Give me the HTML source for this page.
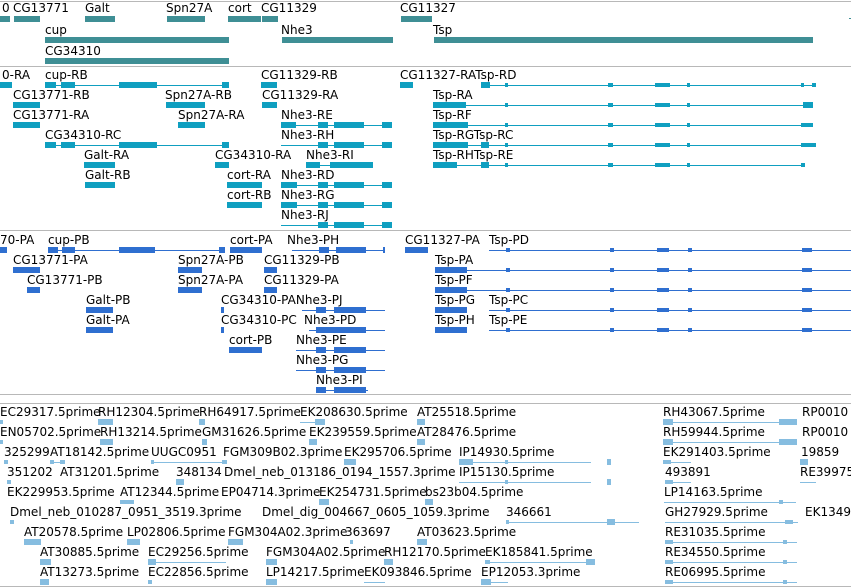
<!DOCTYPE html>
<html><head><meta charset="utf-8"><style>
body{margin:0;width:851px;height:587px;background:#fff;position:relative;overflow:hidden}
.t{position:absolute;font:12px "DejaVu Sans",sans-serif;line-height:14px;white-space:nowrap;color:#000}
.h{position:absolute;left:0;width:851px;height:1px;background:#b8b8b8}
.a div{position:absolute}
.k div{background:#3f8f95}
.c div{background:#0f9fc0}
.b div{background:#2f6fd0}
.l div{background:#86bde0}
</style></head><body>
<div class="h" style="top:1px"></div>
<div class="h" style="top:66px"></div>
<div class="h" style="top:230px"></div>
<div class="h" style="top:394px"></div>
<div class="h" style="top:403px"></div>
<div class="h" style="top:586px"></div>

<!-- Track 1 -->
<div class="t" style="left:2px;top:1px">0</div>
<div class="t" style="left:13px;top:1px">CG13771</div>
<div class="t" style="left:85px;top:1px">Galt</div>
<div class="t" style="left:166px;top:1px">Spn27A</div>
<div class="t" style="left:228px;top:1px">cort</div>
<div class="t" style="left:261px;top:1px">CG11329</div>
<div class="t" style="left:400px;top:1px">CG11327</div>
<div class="t" style="left:45px;top:23px">cup</div>
<div class="t" style="left:281px;top:23px">Nhe3</div>
<div class="t" style="left:433px;top:23px">Tsp</div>
<div class="t" style="left:45px;top:44px">CG34310</div>
<div class="a k">
<div style="left:0;top:16px;width:10px;height:6px"></div>
<div style="left:14px;top:16px;width:26px;height:6px"></div>
<div style="left:85px;top:16px;width:30px;height:6px"></div>
<div style="left:167px;top:16px;width:38px;height:6px"></div>
<div style="left:228px;top:16px;width:33px;height:6px"></div>
<div style="left:262px;top:16px;width:16px;height:6px"></div>
<div style="left:401px;top:16px;width:31px;height:6px"></div>
<div style="left:849px;top:18px;width:2px;height:1px"></div>
<div style="left:45px;top:37px;width:184px;height:6px"></div>
<div style="left:282px;top:37px;width:111px;height:6px"></div>
<div style="left:434px;top:37px;width:379px;height:6px"></div>
<div style="left:45px;top:58px;width:184px;height:6px"></div>
</div>

<!-- Track 2 -->
<div class="t" style="left:2px;top:68px">0-RA</div>
<div class="t" style="left:45px;top:68px">cup-RB</div>
<div class="t" style="left:261px;top:68px">CG11329-RB</div>
<div class="t" style="left:400px;top:68px">CG11327-RATsp-RD</div>
<div class="t" style="left:13px;top:88px">CG13771-RB</div>
<div class="t" style="left:165px;top:88px">Spn27A-RB</div>
<div class="t" style="left:262px;top:88px">CG11329-RA</div>
<div class="t" style="left:433px;top:88px">Tsp-RA</div>
<div class="t" style="left:13px;top:108px">CG13771-RA</div>
<div class="t" style="left:178px;top:108px">Spn27A-RA</div>
<div class="t" style="left:281px;top:108px">Nhe3-RE</div>
<div class="t" style="left:433px;top:108px">Tsp-RF</div>
<div class="t" style="left:45px;top:128px">CG34310-RC</div>
<div class="t" style="left:281px;top:128px">Nhe3-RH</div>
<div class="t" style="left:433px;top:128px">Tsp-RGTsp-RC</div>
<div class="t" style="left:84px;top:148px">Galt-RA</div>
<div class="t" style="left:215px;top:148px">CG34310-RA</div>
<div class="t" style="left:306px;top:148px">Nhe3-RI</div>
<div class="t" style="left:433px;top:148px">Tsp-RHTsp-RE</div>
<div class="t" style="left:85px;top:168px">Galt-RB</div>
<div class="t" style="left:227px;top:168px">cort-RA</div>
<div class="t" style="left:281px;top:168px">Nhe3-RD</div>
<div class="t" style="left:227px;top:188px">cort-RB</div>
<div class="t" style="left:281px;top:188px">Nhe3-RG</div>
<div class="t" style="left:281px;top:208px">Nhe3-RJ</div>
<div class="a c">
<!-- row0 -->
<div style="left:0;top:82px;width:12px;height:6px"></div>
<div style="left:45px;top:85px;width:184px;height:1px"></div>
<div style="left:45px;top:82px;width:11px;height:6px"></div>
<div style="left:61px;top:82px;width:14px;height:6px"></div>
<div style="left:119px;top:82px;width:38px;height:6px"></div>
<div style="left:222px;top:82px;width:7px;height:6px"></div>
<div style="left:261px;top:82px;width:16px;height:6px"></div>
<div style="left:400px;top:82px;width:13px;height:6px"></div>
<div style="left:481px;top:85px;width:335px;height:1px"></div>
<div style="left:481px;top:82px;width:9px;height:6px"></div>
<!-- row1 -->
<div style="left:13px;top:102px;width:27px;height:6px"></div>
<div style="left:166px;top:102px;width:39px;height:6px"></div>
<div style="left:262px;top:102px;width:15px;height:6px"></div>
<div style="left:433px;top:105px;width:380px;height:1px"></div>
<div style="left:433px;top:102px;width:33px;height:6px"></div>
<div style="left:803px;top:102px;width:10px;height:6px"></div>
<!-- row2 -->
<div style="left:13px;top:122px;width:27px;height:6px"></div>
<div style="left:178px;top:122px;width:27px;height:6px"></div>
<div style="left:281px;top:125px;width:111px;height:1px"></div>
<div style="left:281px;top:122px;width:15px;height:6px"></div>
<div style="left:318px;top:122px;width:10px;height:6px"></div>
<div style="left:334px;top:122px;width:30px;height:6px"></div>
<div style="left:382px;top:122px;width:10px;height:6px"></div>
<div style="left:433px;top:125px;width:380px;height:1px"></div>
<div style="left:433px;top:122px;width:35px;height:6px"></div>
<!-- row3 -->
<div style="left:45px;top:145px;width:184px;height:1px"></div>
<div style="left:45px;top:142px;width:11px;height:6px"></div>
<div style="left:61px;top:142px;width:14px;height:6px"></div>
<div style="left:119px;top:142px;width:38px;height:6px"></div>
<div style="left:222px;top:142px;width:7px;height:6px"></div>
<div style="left:281px;top:145px;width:111px;height:1px"></div>
<div style="left:318px;top:142px;width:10px;height:6px"></div>
<div style="left:334px;top:142px;width:30px;height:6px"></div>
<div style="left:382px;top:142px;width:10px;height:6px"></div>
<div style="left:433px;top:145px;width:380px;height:1px"></div>
<div style="left:433px;top:142px;width:35px;height:6px"></div>
<div style="left:481px;top:142px;width:8px;height:6px"></div>
<!-- row4 -->
<div style="left:84px;top:162px;width:31px;height:6px"></div>
<div style="left:215px;top:162px;width:14px;height:6px"></div>
<div style="left:306px;top:165px;width:67px;height:1px"></div>
<div style="left:306px;top:162px;width:14px;height:6px"></div>
<div style="left:330px;top:162px;width:43px;height:6px"></div>
<div style="left:433px;top:165px;width:372px;height:1px"></div>
<div style="left:433px;top:162px;width:24px;height:6px"></div>
<div style="left:481px;top:162px;width:8px;height:6px"></div>
<!-- row5 -->
<div style="left:85px;top:182px;width:30px;height:6px"></div>
<div style="left:227px;top:182px;width:35px;height:6px"></div>
<div style="left:281px;top:185px;width:111px;height:1px"></div>
<div style="left:281px;top:182px;width:16px;height:6px"></div>
<div style="left:318px;top:182px;width:10px;height:6px"></div>
<div style="left:334px;top:182px;width:30px;height:6px"></div>
<div style="left:382px;top:182px;width:10px;height:6px"></div>
<!-- row6 -->
<div style="left:227px;top:202px;width:35px;height:6px"></div>
<div style="left:281px;top:205px;width:111px;height:1px"></div>
<div style="left:281px;top:202px;width:16px;height:6px"></div>
<div style="left:318px;top:202px;width:10px;height:6px"></div>
<div style="left:334px;top:202px;width:30px;height:6px"></div>
<div style="left:382px;top:202px;width:10px;height:6px"></div>
<!-- row7 -->
<div style="left:281px;top:225px;width:111px;height:1px"></div>
<div style="left:318px;top:222px;width:10px;height:6px"></div>
<div style="left:334px;top:222px;width:30px;height:6px"></div>
<div style="left:382px;top:222px;width:10px;height:6px"></div>
<!-- Tsp ticks -->
<div style="left:505px;top:83px;width:3px;height:4px"></div>
<div style="left:608px;top:83px;width:5px;height:4px"></div>
<div style="left:655px;top:83px;width:15px;height:4px"></div>
<div style="left:687px;top:83px;width:3px;height:4px"></div>
<div style="left:801px;top:83px;width:3px;height:4px"></div>
<div style="left:812px;top:83px;width:4px;height:4px"></div>
<div style="left:505px;top:103px;width:3px;height:4px"></div>
<div style="left:608px;top:103px;width:5px;height:4px"></div>
<div style="left:655px;top:103px;width:15px;height:4px"></div>
<div style="left:687px;top:103px;width:3px;height:4px"></div>
<div style="left:505px;top:123px;width:3px;height:4px"></div>
<div style="left:608px;top:123px;width:5px;height:4px"></div>
<div style="left:655px;top:123px;width:15px;height:4px"></div>
<div style="left:687px;top:123px;width:3px;height:4px"></div>
<div style="left:801px;top:123px;width:12px;height:4px"></div>
<div style="left:505px;top:143px;width:3px;height:4px"></div>
<div style="left:608px;top:143px;width:5px;height:4px"></div>
<div style="left:655px;top:143px;width:15px;height:4px"></div>
<div style="left:687px;top:143px;width:3px;height:4px"></div>
<div style="left:801px;top:143px;width:15px;height:4px"></div>
<div style="left:505px;top:163px;width:3px;height:4px"></div>
<div style="left:608px;top:163px;width:5px;height:4px"></div>
<div style="left:655px;top:163px;width:15px;height:4px"></div>
<div style="left:687px;top:163px;width:3px;height:4px"></div>
<div style="left:801px;top:163px;width:4px;height:4px"></div>
</div>

<!-- Track 3 -->
<div class="t" style="left:0;top:233px">70-PA</div>
<div class="t" style="left:48px;top:233px">cup-PB</div>
<div class="t" style="left:230px;top:233px">cort-PA</div>
<div class="t" style="left:287px;top:233px">Nhe3-PH</div>
<div class="t" style="left:405px;top:233px">CG11327-PA</div>
<div class="t" style="left:489px;top:233px">Tsp-PD</div>
<div class="t" style="left:13px;top:253px">CG13771-PA</div>
<div class="t" style="left:178px;top:253px">Spn27A-PB</div>
<div class="t" style="left:264px;top:253px">CG11329-PB</div>
<div class="t" style="left:435px;top:253px">Tsp-PA</div>
<div class="t" style="left:27px;top:273px">CG13771-PB</div>
<div class="t" style="left:178px;top:273px">Spn27A-PA</div>
<div class="t" style="left:264px;top:273px">CG11329-PA</div>
<div class="t" style="left:435px;top:273px">Tsp-PF</div>
<div class="t" style="left:86px;top:293px">Galt-PB</div>
<div class="t" style="left:221px;top:293px">CG34310-PANhe3-PJ</div>
<div class="t" style="left:435px;top:293px">Tsp-PG</div>
<div class="t" style="left:489px;top:293px">Tsp-PC</div>
<div class="t" style="left:86px;top:313px">Galt-PA</div>
<div class="t" style="left:221px;top:313px">CG34310-PC</div>
<div class="t" style="left:304px;top:313px">Nhe3-PD</div>
<div class="t" style="left:435px;top:313px">Tsp-PH</div>
<div class="t" style="left:489px;top:313px">Tsp-PE</div>
<div class="t" style="left:229px;top:333px">cort-PB</div>
<div class="t" style="left:296px;top:333px">Nhe3-PE</div>
<div class="t" style="left:296px;top:353px">Nhe3-PG</div>
<div class="t" style="left:316px;top:373px">Nhe3-PI</div>
<div class="a b">
<div style="left:0;top:247px;width:7px;height:6px"></div>
<div style="left:48px;top:250px;width:177px;height:1px"></div>
<div style="left:48px;top:247px;width:10px;height:6px"></div>
<div style="left:62px;top:247px;width:13px;height:6px"></div>
<div style="left:119px;top:247px;width:36px;height:6px"></div>
<div style="left:219px;top:247px;width:6px;height:6px"></div>
<div style="left:230px;top:247px;width:32px;height:6px"></div>
<div style="left:292px;top:250px;width:93px;height:1px"></div>
<div style="left:319px;top:247px;width:10px;height:6px"></div>
<div style="left:336px;top:247px;width:30px;height:6px"></div>
<div style="left:383px;top:247px;width:2px;height:6px"></div>
<div style="left:405px;top:247px;width:23px;height:6px"></div>
<div style="left:489px;top:250px;width:362px;height:1px"></div>
<div style="left:13px;top:267px;width:27px;height:6px"></div>
<div style="left:178px;top:267px;width:24px;height:6px"></div>
<div style="left:264px;top:267px;width:13px;height:6px"></div>
<div style="left:435px;top:270px;width:416px;height:1px"></div>
<div style="left:435px;top:267px;width:32px;height:6px"></div>
<div style="left:27px;top:287px;width:13px;height:6px"></div>
<div style="left:178px;top:287px;width:24px;height:6px"></div>
<div style="left:264px;top:287px;width:13px;height:6px"></div>
<div style="left:435px;top:290px;width:416px;height:1px"></div>
<div style="left:435px;top:287px;width:32px;height:6px"></div>
<div style="left:86px;top:307px;width:27px;height:6px"></div>
<div style="left:221px;top:307px;width:3px;height:6px"></div>
<div style="left:302px;top:310px;width:83px;height:1px"></div>
<div style="left:316px;top:307px;width:10px;height:6px"></div>
<div style="left:334px;top:307px;width:32px;height:6px"></div>
<div style="left:435px;top:307px;width:32px;height:6px"></div>
<div style="left:489px;top:310px;width:362px;height:1px"></div>
<div style="left:86px;top:327px;width:27px;height:6px"></div>
<div style="left:221px;top:327px;width:3px;height:6px"></div>
<div style="left:309px;top:330px;width:76px;height:1px"></div>
<div style="left:316px;top:327px;width:50px;height:6px"></div>
<div style="left:435px;top:327px;width:32px;height:6px"></div>
<div style="left:489px;top:330px;width:362px;height:1px"></div>
<div style="left:229px;top:347px;width:33px;height:6px"></div>
<div style="left:296px;top:350px;width:89px;height:1px"></div>
<div style="left:316px;top:347px;width:10px;height:6px"></div>
<div style="left:334px;top:347px;width:32px;height:6px"></div>
<div style="left:296px;top:370px;width:89px;height:1px"></div>
<div style="left:316px;top:367px;width:10px;height:6px"></div>
<div style="left:334px;top:367px;width:32px;height:6px"></div>
<div style="left:316px;top:390px;width:52px;height:1px"></div>
<div style="left:316px;top:387px;width:10px;height:6px"></div>
<div style="left:334px;top:387px;width:32px;height:6px"></div>
<div style="left:506px;top:248px;width:4px;height:4px"></div><div style="left:610px;top:248px;width:4px;height:4px"></div><div style="left:657px;top:248px;width:12px;height:4px"></div><div style="left:688px;top:248px;width:4px;height:4px"></div><div style="left:802px;top:248px;width:10px;height:4px"></div>
<div style="left:506px;top:268px;width:4px;height:4px"></div><div style="left:610px;top:268px;width:4px;height:4px"></div><div style="left:657px;top:268px;width:12px;height:4px"></div><div style="left:688px;top:268px;width:4px;height:4px"></div><div style="left:802px;top:268px;width:10px;height:4px"></div>
<div style="left:506px;top:288px;width:4px;height:4px"></div><div style="left:610px;top:288px;width:4px;height:4px"></div><div style="left:657px;top:288px;width:12px;height:4px"></div><div style="left:688px;top:288px;width:4px;height:4px"></div><div style="left:802px;top:288px;width:10px;height:4px"></div>
<div style="left:506px;top:308px;width:4px;height:4px"></div><div style="left:610px;top:308px;width:4px;height:4px"></div><div style="left:657px;top:308px;width:12px;height:4px"></div><div style="left:688px;top:308px;width:4px;height:4px"></div><div style="left:802px;top:308px;width:10px;height:4px"></div>
<div style="left:506px;top:328px;width:4px;height:4px"></div><div style="left:610px;top:328px;width:4px;height:4px"></div><div style="left:657px;top:328px;width:12px;height:4px"></div><div style="left:688px;top:328px;width:4px;height:4px"></div><div style="left:802px;top:328px;width:10px;height:4px"></div>
</div>

<!-- Track 4 -->
<div class="t" style="left:0;top:405px">EC29317.5prime</div>
<div class="t" style="left:98px;top:405px">RH12304.5prime</div>
<div class="t" style="left:199px;top:405px">RH64917.5prime</div>
<div class="t" style="left:300px;top:405px">EK208630.5prime</div>
<div class="t" style="left:417px;top:405px">AT25518.5prime</div>
<div class="t" style="left:663px;top:405px">RH43067.5prime</div>
<div class="t" style="left:802px;top:405px">RP0010</div>
<div class="t" style="left:0;top:425px">EN05702.5prime</div>
<div class="t" style="left:100px;top:425px">RH13214.5prime</div>
<div class="t" style="left:202px;top:425px">GM31626.5prime</div>
<div class="t" style="left:309px;top:425px">EK239559.5prime</div>
<div class="t" style="left:417px;top:425px">AT28476.5prime</div>
<div class="t" style="left:663px;top:425px">RH59944.5prime</div>
<div class="t" style="left:802px;top:425px">RP0010</div>
<div class="t" style="left:4px;top:445px">325299</div>
<div class="t" style="left:50px;top:445px">AT18142.5prime</div>
<div class="t" style="left:151px;top:445px">UUGC0951</div>
<div class="t" style="left:223px;top:445px">FGM309B02.3prime</div>
<div class="t" style="left:344px;top:445px">EK295706.5prime</div>
<div class="t" style="left:459px;top:445px">IP14930.5prime</div>
<div class="t" style="left:663px;top:445px">EK291403.5prime</div>
<div class="t" style="left:801px;top:445px">19859</div>
<div class="t" style="left:7px;top:465px">351202</div>
<div class="t" style="left:60px;top:465px">AT31201.5prime</div>
<div class="t" style="left:176px;top:465px">348134</div>
<div class="t" style="left:224px;top:465px">Dmel_neb_013186_0194_1557.3prime</div>
<div class="t" style="left:459px;top:465px">IP15130.5prime</div>
<div class="t" style="left:665px;top:465px">493891</div>
<div class="t" style="left:800px;top:465px">RE39975</div>
<div class="t" style="left:7px;top:485px">EK229953.5prime</div>
<div class="t" style="left:120px;top:485px">AT12344.5prime</div>
<div class="t" style="left:221px;top:485px">EP04714.3prime</div>
<div class="t" style="left:319px;top:485px">EK254731.5prime</div>
<div class="t" style="left:425px;top:485px">bs23b04.5prime</div>
<div class="t" style="left:664px;top:485px">LP14163.5prime</div>
<div class="t" style="left:10px;top:505px">Dmel_neb_010287_0951_3519.3prime</div>
<div class="t" style="left:262px;top:505px">Dmel_dig_004667_0605_1059.3prime</div>
<div class="t" style="left:506px;top:505px">346661</div>
<div class="t" style="left:665px;top:505px">GH27929.5prime</div>
<div class="t" style="left:805px;top:505px">EK1349</div>
<div class="t" style="left:24px;top:525px">AT20578.5prime</div>
<div class="t" style="left:127px;top:525px">LP02806.5prime</div>
<div class="t" style="left:228px;top:525px">FGM304A02.3prime</div>
<div class="t" style="left:345px;top:525px">363697</div>
<div class="t" style="left:417px;top:525px">AT03623.5prime</div>
<div class="t" style="left:665px;top:525px">RE31035.5prime</div>
<div class="t" style="left:40px;top:545px">AT30885.5prime</div>
<div class="t" style="left:148px;top:545px">EC29256.5prime</div>
<div class="t" style="left:266px;top:545px">FGM304A02.5prime</div>
<div class="t" style="left:384px;top:545px">RH12170.5prime</div>
<div class="t" style="left:485px;top:545px">EK185841.5prime</div>
<div class="t" style="left:665px;top:545px">RE34550.5prime</div>
<div class="t" style="left:40px;top:565px">AT13273.5prime</div>
<div class="t" style="left:148px;top:565px">EC22856.5prime</div>
<div class="t" style="left:266px;top:565px">LP14217.5prime</div>
<div class="t" style="left:364px;top:565px">EK093846.5prime</div>
<div class="t" style="left:481px;top:565px">EP12053.3prime</div>
<div class="t" style="left:665px;top:565px">RE06995.5prime</div>
<div class="a l">
<div style="left:0;top:420px;width:3px;height:4px"></div>
<div style="left:98px;top:419px;width:15px;height:6px"></div>
<div style="left:199px;top:419px;width:6px;height:6px"></div>
<div style="left:300px;top:422px;width:25px;height:1px"></div><div style="left:315px;top:419px;width:10px;height:6px"></div>
<div style="left:417px;top:419px;width:8px;height:6px"></div>
<div style="left:663px;top:422px;width:134px;height:1px"></div><div style="left:663px;top:419px;width:10px;height:6px"></div><div style="left:779px;top:419px;width:18px;height:6px"></div>
<div style="left:0;top:440px;width:3px;height:4px"></div>
<div style="left:100px;top:439px;width:13px;height:6px"></div>
<div style="left:202px;top:439px;width:5px;height:6px"></div>
<div style="left:309px;top:439px;width:8px;height:6px"></div>
<div style="left:417px;top:439px;width:8px;height:6px"></div>
<div style="left:663px;top:442px;width:134px;height:1px"></div><div style="left:663px;top:439px;width:10px;height:6px"></div><div style="left:779px;top:439px;width:18px;height:6px"></div>
<div style="left:4px;top:460px;width:4px;height:4px"></div>
<div style="left:50px;top:462px;width:15px;height:1px"></div><div style="left:50px;top:460px;width:4px;height:4px"></div><div style="left:60px;top:460px;width:5px;height:4px"></div>
<div style="left:151px;top:462px;width:76px;height:1px"></div><div style="left:151px;top:460px;width:3px;height:4px"></div><div style="left:222px;top:460px;width:5px;height:4px"></div>
<div style="left:344px;top:459px;width:12px;height:6px"></div>
<div style="left:459px;top:462px;width:132px;height:1px"></div><div style="left:459px;top:459px;width:14px;height:6px"></div><div style="left:505px;top:460px;width:3px;height:4px"></div><div style="left:607px;top:459px;width:4px;height:6px"></div>
<div style="left:663px;top:462px;width:28px;height:1px"></div><div style="left:663px;top:460px;width:8px;height:4px"></div>
<div style="left:800px;top:459px;width:8px;height:6px"></div>
<div style="left:7px;top:480px;width:4px;height:4px"></div>
<div style="left:176px;top:479px;width:8px;height:6px"></div>
<div style="left:459px;top:482px;width:132px;height:1px"></div><div style="left:505px;top:480px;width:3px;height:4px"></div><div style="left:607px;top:479px;width:4px;height:6px"></div>
<div style="left:665px;top:482px;width:26px;height:1px"></div><div style="left:665px;top:480px;width:8px;height:4px"></div>
<div style="left:800px;top:482px;width:16px;height:1px"></div>
<div style="left:120px;top:500px;width:14px;height:4px"></div>
<div style="left:319px;top:499px;width:10px;height:6px"></div>
<div style="left:425px;top:499px;width:8px;height:6px"></div>
<div style="left:664px;top:502px;width:132px;height:1px"></div><div style="left:779px;top:500px;width:4px;height:4px"></div>
<div style="left:10px;top:520px;width:4px;height:4px"></div>
<div style="left:506px;top:522px;width:133px;height:1px"></div><div style="left:506px;top:520px;width:3px;height:4px"></div><div style="left:607px;top:519px;width:8px;height:6px"></div>
<div style="left:665px;top:522px;width:133px;height:1px"></div><div style="left:785px;top:520px;width:8px;height:4px"></div>
<div style="left:24px;top:539px;width:17px;height:6px"></div>
<div style="left:127px;top:539px;width:13px;height:6px"></div>
<div style="left:228px;top:539px;width:15px;height:6px"></div>
<div style="left:350px;top:540px;width:3px;height:4px"></div>
<div style="left:417px;top:539px;width:10px;height:6px"></div>
<div style="left:665px;top:542px;width:132px;height:1px"></div><div style="left:665px;top:540px;width:8px;height:4px"></div><div style="left:783px;top:540px;width:4px;height:4px"></div>
<div style="left:40px;top:559px;width:11px;height:6px"></div>
<div style="left:148px;top:562px;width:78px;height:1px"></div><div style="left:148px;top:559px;width:8px;height:6px"></div>
<div style="left:266px;top:559px;width:11px;height:6px"></div>
<div style="left:384px;top:559px;width:9px;height:6px"></div>
<div style="left:485px;top:562px;width:110px;height:1px"></div><div style="left:485px;top:560px;width:5px;height:4px"></div><div style="left:586px;top:559px;width:9px;height:6px"></div>
<div style="left:665px;top:562px;width:132px;height:1px"></div><div style="left:665px;top:560px;width:8px;height:4px"></div><div style="left:783px;top:560px;width:4px;height:4px"></div>
<div style="left:40px;top:579px;width:9px;height:6px"></div>
<div style="left:148px;top:580px;width:4px;height:4px"></div>
<div style="left:266px;top:579px;width:11px;height:6px"></div>
<div style="left:364px;top:582px;width:21px;height:1px"></div>
<div style="left:481px;top:582px;width:27px;height:1px"></div><div style="left:481px;top:579px;width:10px;height:6px"></div>
<div style="left:665px;top:582px;width:132px;height:1px"></div><div style="left:665px;top:580px;width:8px;height:4px"></div><div style="left:783px;top:580px;width:4px;height:4px"></div>
</div>
</body></html>
